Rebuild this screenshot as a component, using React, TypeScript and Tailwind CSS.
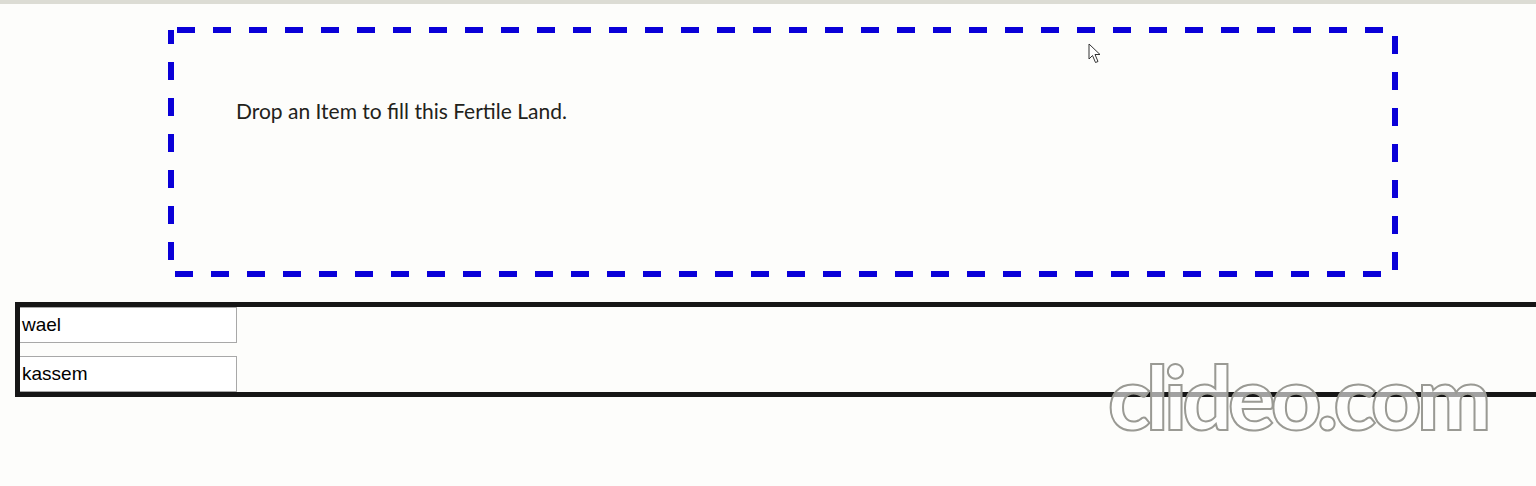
import React from "react";

export default function App() {
  return (
    <div className="relative w-[1536px] h-[486px] overflow-hidden bg-[#fdfdfb]">
      <div className="h-[4px] bg-[#dcdcd4]" />
      <div className="relative ml-[168px] mt-[23px] w-[1230px] h-[250px] pl-[68px] pt-[72px]">
        <svg className="absolute inset-0" width="1230" height="250" viewBox="0 0 1230 250">
          <rect x="3" y="3" width="1224" height="244" fill="none" stroke="#0a00d8" strokeWidth="6" strokeDasharray="18 18" strokeDashoffset="-6" />
        </svg>
        <p className="text-[21px] leading-[24px] text-[#22221a]" style={{ fontFamily: "Lato, 'Open Sans', sans-serif" }}>
          Drop an Item to fill this Fertile Land.
        </p>
      </div>
      <div className="ml-[15px] mt-[25px] w-[1540px] border-[5px] border-[#161616] flex flex-col gap-[13px]" style={{ fontFamily: "'Liberation Sans', Arial, sans-serif" }}>
        <div className="w-[217px] h-[36px] border border-[#a8a8a8] border-l-0 flex items-center pl-[2px] text-[19px] text-black bg-white">wael</div>
        <div className="w-[217px] h-[36px] border border-[#a8a8a8] border-l-0 flex items-center pl-[2px] text-[19px] text-black bg-white">kassem</div>
      </div>
      <svg className="absolute left-[1088px] top-[43px]" width="14" height="22" viewBox="0 0 14 22">
        <path d="M1 1 L1 16 L4.5 12.5 L7.5 19.5 L10 18.5 L7 11.5 L12 11.5 Z" fill="#fff" stroke="#333" strokeWidth="1" strokeLinejoin="round" />
      </svg>
      <div
        className="absolute left-[1108px] top-[346px] text-[88px] leading-[100px] font-black tracking-[-4.5px] text-[rgba(255,255,255,0.6)]"
        style={{ fontFamily: "Lato, 'Open Sans', sans-serif", WebkitTextStroke: "2px #9a9a94" }}
      >
        clideo.com
      </div>
    </div>
  );
}
